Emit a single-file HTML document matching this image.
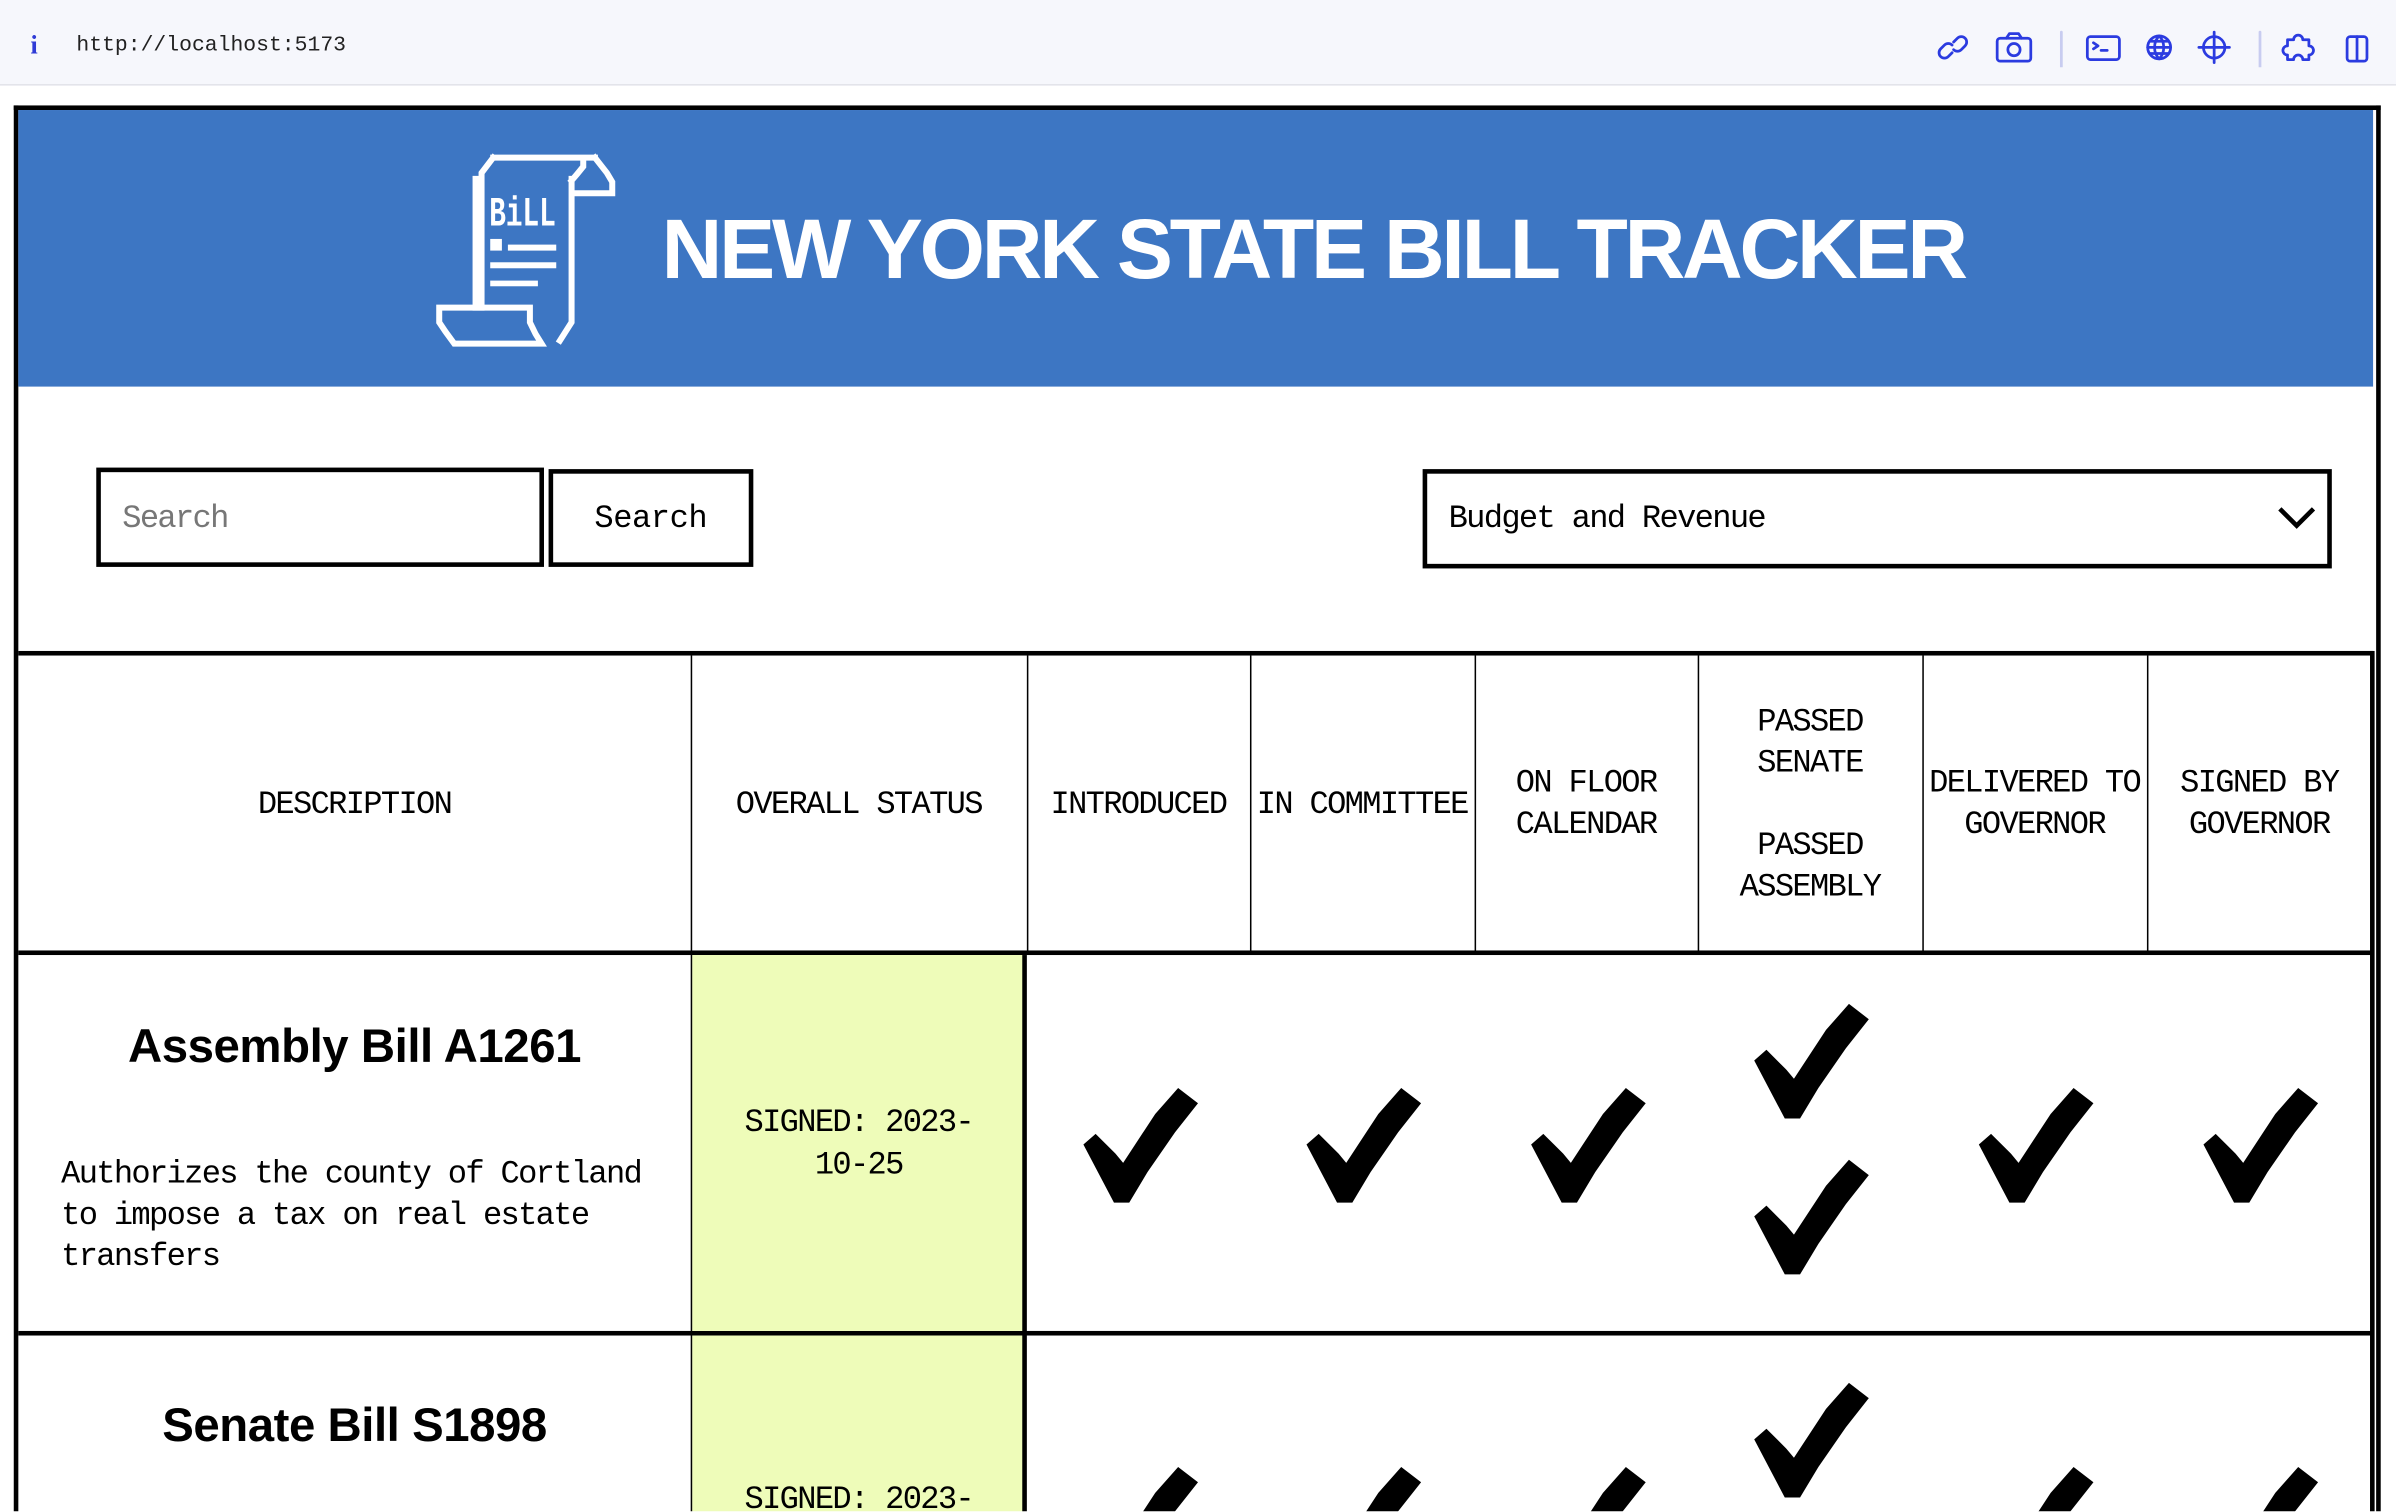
<!DOCTYPE html>
<html><head><meta charset="utf-8">
<style>
html,body{margin:0;padding:0;width:2396px;height:1512px;overflow:hidden;background:#fff}
#s{position:absolute;left:0;top:0;width:1568px;height:989px;overflow:hidden;transform:scale(1.52806);transform-origin:0 0;font-family:"Liberation Mono",monospace;color:#000}
.a{position:absolute}
.bar{left:0;top:0;width:1568px;height:55px;background:#f6f7fc;border-bottom:1px solid #e2e3ea}
.mono{font-family:"Liberation Mono",monospace}
.hd{font-size:21px;letter-spacing:-1.1px;line-height:27px;text-align:center;display:flex;align-items:center;justify-content:center;padding-top:3px;box-sizing:border-box}
.vl{background:#000;width:1.3px}
.chk{position:absolute;width:80px;height:80px}
.t{font-size:21px;letter-spacing:-1.1px}
</style></head><body><div id="s">
<div class="a bar"></div>
<div class="a" style="left:20px;top:20px;color:#2f3bd6;font:bold 17px 'Liberation Serif',serif">i</div>
<div class="a mono" style="left:50px;top:22px;font-size:14px;color:#222">http://localhost:5173</div>
<svg class="a" style="left:1265px;top:18px" width="290" height="26" viewBox="0 0 290 26" fill="none" stroke="#2b3be0" stroke-width="1.8" stroke-linecap="round" stroke-linejoin="round">
<path d="M13.5 9.5l2.5-2.5a3.5 3.5 0 0 1 5 5l-2.5 2.5a3.5 3.5 0 0 1-5 0M12.5 16.5l-2.5 2.5a3.5 3.5 0 0 1-5-5l2.5-2.5a3.5 3.5 0 0 1 5 0"/>
<rect x="42" y="7" width="22" height="15" rx="2"/><path d="M48 7l2-3h6l2 3"/><circle cx="53" cy="14.5" r="4"/>
<line x1="84" y1="3" x2="84" y2="26" stroke="#c8ccf0"/>
<rect x="101" y="6" width="21" height="15" rx="2"/><path d="M105 10l3 2-3 2M110 15h4"/>
<circle cx="148" cy="13" r="7.5"/><path d="M140.5 13h15M148 5.5c-4 4-4 11 0 15M148 5.5c4 4 4 11 0 15M142 9h12M142 17h12"/>
<circle cx="184" cy="13" r="7"/><path d="M184 3v20M174 13h20"/>
<line x1="214" y1="3" x2="214" y2="26" stroke="#c8ccf0"/>
<path d="M236 8h4a3 3 0 0 1 6 0h4v4a3 3 0 0 1 0 6v3h-4a3 3 0 0 0-6 0h-4v-3a3 3 0 0 1 0-6z" transform="translate(-4 0)"/>
<rect x="271" y="6" width="13" height="16" rx="2"/><path d="M277.5 6v16"/>
</svg>
<div class="a" style="left:9px;top:69px;width:1543px;height:940px;border:3px solid #000;border-bottom:none"></div>
<div class="a" style="left:12px;top:72px;width:1541px;height:181px;background:#3d76c3"></div>
<svg class="a" style="left:275px;top:91.6px" width="144" height="144" viewBox="0 0 660 660" fill="none" stroke="#fff" stroke-width="18" stroke-linecap="square">
<path d="M219 51H524M219 51L184 97V501M166 115V501"/>
<path d="M57 501H329V545L346 580L364 609H102L75 572L57 545Z"/>
<path d="M454 115V545L419 600M489 60V78L471 100L454 120M524 51L560 97L576 124V158H454"/>
<rect x="210" y="295" width="35" height="35" fill="#fff" stroke="none"/>
<rect x="263" y="312" width="145" height="18" fill="#fff" stroke="none"/>
<rect x="210" y="365" width="198" height="18" fill="#fff" stroke="none"/>
<rect x="210" y="420" width="143" height="17" fill="#fff" stroke="none"/>
<text x="207" y="255" fill="#fff" stroke="none" font-family="Liberation Mono,monospace" font-weight="bold" font-size="125" textLength="200" lengthAdjust="spacingAndGlyphs">BiLL</text>
</svg>
<div class="a" style="left:433px;top:131px;color:#fff;font:bold 55px 'Liberation Sans',sans-serif;letter-spacing:-2.1px">NEW YORK STATE BILL TRACKER</div>
<div class="a" style="left:63px;top:306px;width:287px;height:59px;border:3px solid #000"></div>
<div class="a t" style="left:80px;top:329px;color:#777">Search</div>
<div class="a" style="left:359px;top:307px;width:128px;height:58px;border:3px solid #000"></div>
<div class="a t" style="left:389px;top:329px;letter-spacing:-0.3px">Search</div>
<div class="a" style="left:931px;top:307px;width:589px;height:59px;border:3px solid #000"></div>
<div class="a t" style="left:948px;top:329px">Budget and Revenue</div>
<svg class="a" style="left:1490px;top:330px" width="26" height="18" viewBox="0 0 26 18"><path d="M2 3l11 11L24 3" stroke="#000" stroke-width="3" fill="none"/></svg>
<div class="a" style="left:12px;top:426px;width:1541px;height:3px;background:#000"></div>
<div class="a" style="left:12px;top:622px;width:1541px;height:3px;background:#000"></div>
<div class="a" style="left:12px;top:871px;width:1541px;height:3px;background:#000"></div>
<div class="a" style="left:1551px;top:426px;width:3px;height:570px;background:#000"></div>
<div class="a" style="left:453px;top:625px;width:217px;height:246px;background:#eefcb9"></div>
<div class="a" style="left:453px;top:874px;width:217px;height:120px;background:#eefcb9"></div>
<div class="a vl" style="left:451.5px;top:429px;height:570px"></div>
<div class="a" style="left:669px;top:625px;width:3px;height:370px;background:#000"></div>
<div class="a vl" style="left:671.5px;top:429px;height:194px"></div>
<div class="a vl" style="left:818px;top:429px;height:194px"></div>
<div class="a vl" style="left:964.5px;top:429px;height:194px"></div>
<div class="a vl" style="left:1111px;top:429px;height:194px"></div>
<div class="a vl" style="left:1257.5px;top:429px;height:194px"></div>
<div class="a vl" style="left:1404.5px;top:429px;height:194px"></div>
<div class="a hd" style="left:12px;top:429px;width:440px;height:193px">DESCRIPTION</div>
<div class="a hd" style="left:452px;top:429px;width:220px;height:193px">OVERALL STATUS</div>
<div class="a hd" style="left:672px;top:429px;width:146px;height:193px">INTRODUCED</div>
<div class="a hd" style="left:818px;top:429px;width:147px;height:193px;white-space:nowrap">IN COMMITTEE</div>
<div class="a hd" style="left:965px;top:429px;width:146px;height:193px">ON FLOOR<br>CALENDAR</div>
<div class="a hd" style="left:1111px;top:429px;width:147px;height:193px">PASSED<br>SENATE<br><br>PASSED<br>ASSEMBLY</div>
<div class="a hd" style="left:1258px;top:429px;width:147px;height:193px;white-space:nowrap">DELIVERED TO<br>GOVERNOR</div>
<div class="a hd" style="left:1405px;top:429px;width:147px;height:193px">SIGNED BY<br>GOVERNOR</div>
<div class="a" style="left:12px;top:667px;width:440px;text-align:center;font:bold 31px 'Liberation Sans',sans-serif;letter-spacing:-0.3px">Assembly Bill A1261</div>
<div class="a t" style="left:40px;top:756px;width:400px;line-height:27px">Authorizes the county of Cortland to impose a tax on real estate transfers</div>
<div class="a t" style="left:452px;top:722px;width:220px;text-align:center;line-height:28px">SIGNED: 2023-<br>10-25</div>
<div class="a" style="left:12px;top:915px;width:440px;text-align:center;font:bold 31px 'Liberation Sans',sans-serif;letter-spacing:-0.3px">Senate Bill S1898</div>
<div class="a t" style="left:452px;top:969px;width:220px;text-align:center;line-height:28px">SIGNED: 2023-</div>
<svg width="0" height="0" style="position:absolute"><defs><symbol id="c" viewBox="0 0 80 80"><path d="M3 40L11 33L18 40L24 46L29 52L50 20L65 3L78 13L63 32L45 58L33 78L23 78Z" fill="#000"/></symbol></defs></svg>
<svg class="chk" style="left:706px;top:709px"><use href="#c"/></svg>
<svg class="chk" style="left:852px;top:709px"><use href="#c"/></svg>
<svg class="chk" style="left:999px;top:709px"><use href="#c"/></svg>
<svg class="chk" style="left:1145px;top:654px"><use href="#c"/></svg>
<svg class="chk" style="left:1145px;top:756px"><use href="#c"/></svg>
<svg class="chk" style="left:1292px;top:709px"><use href="#c"/></svg>
<svg class="chk" style="left:1439px;top:709px"><use href="#c"/></svg>
<svg class="chk" style="left:706px;top:957px"><use href="#c"/></svg>
<svg class="chk" style="left:852px;top:957px"><use href="#c"/></svg>
<svg class="chk" style="left:999px;top:957px"><use href="#c"/></svg>
<svg class="chk" style="left:1145px;top:902px"><use href="#c"/></svg>
<svg class="chk" style="left:1292px;top:957px"><use href="#c"/></svg>
<svg class="chk" style="left:1439px;top:957px"><use href="#c"/></svg>
</div></body></html>
